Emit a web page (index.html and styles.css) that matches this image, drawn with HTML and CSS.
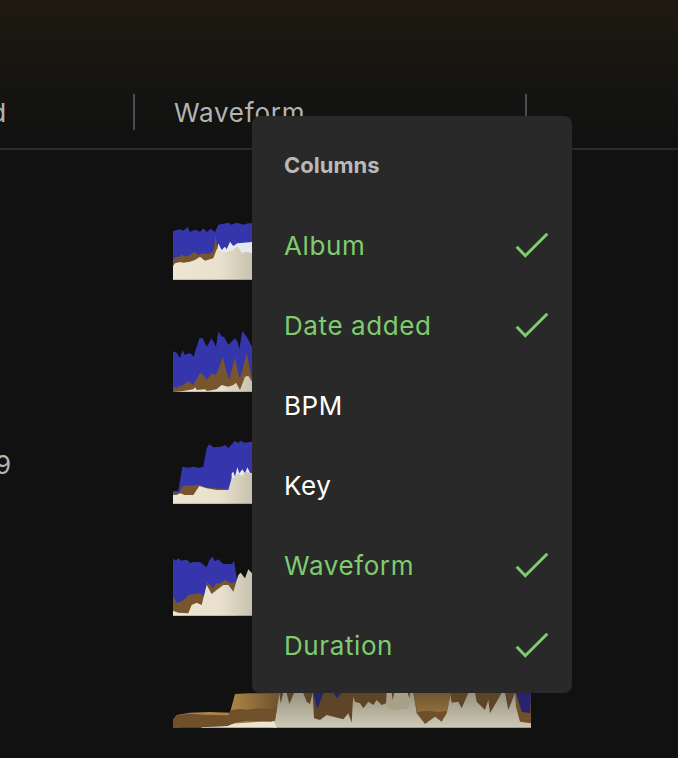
FILE: index.html
```html
<!DOCTYPE html>
<html lang="en">
<head>
<meta charset="utf-8">
<title>Columns</title>
<link rel="stylesheet" href="styles.css">
</head>
<body>
<div class="page">
  <header class="head">
    <div class="cell col-date"><span>Date added</span></div>
    <div class="cell col-wave"><span>Waveform</span></div>
    <div class="cell col-rest"></div>
  </header>
  <main class="rows">
    <div class="row">
      <div class="col-date"></div>
      <svg class="wave" viewBox="69 18 1074 192" aria-hidden="true">
        <polygon class="blue" points="69,64 80,60 90,58 100,62 106,58 112,50 120,66 130,61 140,60 150,66 160,55 170,66 182,56 195,66 205,44 220,41 235,38 245,44 260,38 280,44 295,40 306,40 1143,40 1143,209 69,209"/>
        <polygon class="brown" points="69,142 74,146 80,140 90,140 95,132 105,140 120,135 133,125 145,135 160,130 175,132 190,125 197,75 202,120 202,209 69,209"/>
        <polygon class="pale" points="200,125 205,100 215,120 225,110 230,118 240,95 250,108 262,100 280,98 306,96 1143,96 1143,140 200,140"/>
        <polygon class="cream" fill="url(#c1)" points="69,209 69,168 75,160 90,156 100,158 120,155 135,150 150,140 165,152 190,145 200,118 220,128 235,125 250,120 262,108 275,130 290,125 306,130 1143,130 1143,209"/>
        <defs><linearGradient id="c1" gradientUnits="userSpaceOnUse" x1="69" y1="0" x2="306" y2="0"><stop offset="0" stop-color="#eee6d3"/><stop offset=".6" stop-color="#e8e0cc"/><stop offset="1" stop-color="#c9c2b0"/></linearGradient></defs>
      </svg>
    </div>
    <div class="row">
      <div class="col-date"></div>
      <svg class="wave" viewBox="69 354 1074 192" aria-hidden="true">
        <polygon class="blue" points="69,424 80,428 90,445 97,420 105,435 115,430 125,432 130,442 148,385 158,385 170,410 185,385 198,410 205,364 215,380 222,380 235,404 255,385 263,395 268,418 277,363 290,380 306,410 1143,410 1143,545 69,545"/>
        <polygon class="brown" points="69,530 80,535 85,530 100,525 115,514 130,525 150,488 160,495 170,510 185,490 195,495 203,485 218,440 228,480 238,510 245,480 255,442 265,490 270,505 290,430 298,470 306,505 1143,505 1143,545 69,545"/>
        <polygon class="cream" fill="url(#c2)" points="69,545 100,543 130,538 135,532 140,540 165,538 172,543 200,538 215,525 235,530 250,525 258,518 270,540 285,500 295,497 306,515 1143,515 1143,545"/>
        <defs><linearGradient id="c2" gradientUnits="userSpaceOnUse" x1="69" y1="0" x2="306" y2="0"><stop offset="0" stop-color="#eee6d3"/><stop offset=".6" stop-color="#e8e0cc"/><stop offset="1" stop-color="#c9c2b0"/></linearGradient></defs>
      </svg>
    </div>
    <div class="row">
      <div class="col-date"><span class="date">2019</span></div>
      <svg class="wave" viewBox="69 60 1074 192" aria-hidden="true">
        <polygon class="blue" points="69,213 85,213 97,140 115,143 130,140 145,143 160,140 170,85 178,72 190,82 215,80 225,75 235,84 255,62 265,70 270,62 285,68 306,65 1143,65 1143,251 69,251"/>
        <polygon class="brown" points="69,218 88,218 98,197 150,195 170,203 235,207 250,251 69,251"/>
        <polygon class="pale" points="245,160 250,155 255,170 262,142 268,160 277,148 285,160 292,142 300,158 306,160 306,200 245,200"/>
        <polygon class="cream" fill="url(#c3)" points="69,251 69,225 80,225 90,220 105,225 130,225 148,198 170,205 200,210 235,210 245,175 255,170 265,160 275,168 290,155 306,162 1143,162 1143,251"/>
        <defs><linearGradient id="c3" gradientUnits="userSpaceOnUse" x1="69" y1="0" x2="306" y2="0"><stop offset="0" stop-color="#eee6d3"/><stop offset=".6" stop-color="#e8e0cc"/><stop offset="1" stop-color="#c9c2b0"/></linearGradient></defs>
      </svg>
    </div>
    <div class="row">
      <div class="col-date"></div>
      <svg class="wave" viewBox="69 396 1074 192" aria-hidden="true">
        <polygon class="blue" points="69,416 78,422 84,415 95,422 105,419 115,422 120,430 130,426 150,426 170,442 178,420 188,410 195,424 205,418 220,432 245,432 252,422 262,485 69,587"/>
        <polygon class="brown" points="69,530 80,548 90,545 105,538 115,525 150,520 163,530 172,485 180,495 188,505 200,490 210,490 225,480 245,490 262,483 262,587 69,587"/>
        <polygon class="cream" fill="url(#c4)" points="69,587 69,572 85,578 115,580 125,555 140,548 155,555 170,495 185,522 200,510 220,495 235,495 250,515 265,465 272,458 285,475 295,448 306,460 1143,460 1143,587"/>
        <defs><linearGradient id="c4" gradientUnits="userSpaceOnUse" x1="69" y1="0" x2="306" y2="0"><stop offset="0" stop-color="#eee6d3"/><stop offset=".6" stop-color="#e8e0cc"/><stop offset="1" stop-color="#c9c2b0"/></linearGradient></defs>
      </svg>
    </div>
    <div class="row">
      <div class="col-date"></div>
      <svg class="wave" viewBox="39 -18 1074 192" aria-hidden="true">
        <defs>
          <linearGradient id="c5" gradientUnits="userSpaceOnUse" x1="0" y1="70" x2="0" y2="173"><stop offset="0" stop-color="#98937f"/><stop offset="1" stop-color="#cfcab7"/></linearGradient>
          <linearGradient id="b5" gradientUnits="userSpaceOnUse" x1="215" y1="0" x2="355" y2="0"><stop offset="0" stop-color="#ab8547"/><stop offset="1" stop-color="#6e5230"/></linearGradient>
          <linearGradient id="d5" gradientUnits="userSpaceOnUse" x1="0" y1="69" x2="0" y2="160"><stop offset="0" stop-color="#5c4427"/><stop offset="1" stop-color="#604628"/></linearGradient>
          <linearGradient id="g5" gradientUnits="userSpaceOnUse" x1="0" y1="69" x2="0" y2="125"><stop offset="0" stop-color="#6f5530"/><stop offset="1" stop-color="#8f6e3a"/></linearGradient>
        </defs>
        <polygon fill="url(#c5)" points="352,69 1113,69 1113,173 340,173"/>
        <polygon class="glow" points="680,69 750,69 745,115 700,120 680,110"/>
        <polygon class="cream-l" points="120,173 130,170 200,168 225,158 260,152 340,150 350,173"/>
        <polygon fill="url(#b5)" points="39,173 39,150 50,135 90,128 150,126 210,128 225,72 270,70 310,70 358,69 355,90 345,152 39,173"/>
        <polygon class="mid" points="39,173 39,150 50,135 90,131 130,134 205,136 215,120 240,117 260,119 300,115 330,118 352,108 345,150 335,155 260,152 225,158 200,168 130,170 120,173"/>
        <g fill="url(#d5)">
          <polygon points="358,69 370,69 362,100"/>
          <polygon points="380,69 402,69 388,102"/>
          <polygon points="430,69 458,69 450,102 440,95"/>
          <polygon points="458,69 580,69 575,158 565,130 550,148 520,140 500,135 480,150 462,145"/>
          <polygon points="575,69 680,69 678,100 665,105 650,90 640,105 625,95 610,115 600,100 585,95"/>
          <polygon points="695,69 703,69 698,90"/>
          <polygon points="743,69 750,69 748,85"/>
          <polygon points="870,69 925,69 905,115 895,95 875,98"/>
          <polygon points="945,69 1025,69 990,130 985,90 975,120 950,95"/>
          <polygon points="1035,69 1065,69 1045,120"/>
        </g>
        <polygon class="mid" points="760,69 872,69 860,130 845,155 825,140 795,162 770,130"/>
        <polygon fill="url(#g5)" points="760,69 872,69 862,122 835,126 800,122 772,126"/>
        <polygon class="mid" points="1065,69 1113,69 1113,160 1080,155 1068,110"/>
        <polygon class="navy" points="460,69 490,69 472,118"/>
        <polygon class="navy" points="520,69 545,69 530,85"/>
        <polygon class="navy" points="1068,69 1113,69 1110,130 1085,125"/>
      </svg>
    </div>
  </main>
</div>
<section class="menu">
  <h2 class="menu-title">Columns</h2>
  <ul class="menu-list">
    <li class="item on">Album<svg class="check" viewBox="0 0 34 26"><polyline points="1.7,14.7 10.3,23.7 32.3,1.7"/></svg></li>
    <li class="item on">Date added<svg class="check" viewBox="0 0 34 26"><polyline points="1.7,14.7 10.3,23.7 32.3,1.7"/></svg></li>
    <li class="item">BPM</li>
    <li class="item">Key</li>
    <li class="item on">Waveform<svg class="check" viewBox="0 0 34 26"><polyline points="1.7,14.7 10.3,23.7 32.3,1.7"/></svg></li>
    <li class="item on">Duration<svg class="check" viewBox="0 0 34 26"><polyline points="1.7,14.7 10.3,23.7 32.3,1.7"/></svg></li>
  </ul>
</section>
</body>
</html>
```
FILE: styles.css
```css
* { box-sizing: border-box; }
html, body { margin: 0; padding: 0; height: 100%; }
body {
  background: #111111;
  font-family: "Inter", "Liberation Sans", sans-serif;
  overflow: hidden;
  position: relative;
}
.page { width: 678px; height: 758px; overflow: hidden; }
.head {
  height: 150px;
  padding-top: 94px;
  display: flex;
  align-items: flex-start;
  border-bottom: 2px solid #2a2a2a;
  background: linear-gradient(180deg, #1e1a10 0%, #1a1710 30%, #131312 70%, #111111 100%);
}
.cell {
  height: 36px;
  display: flex;
  align-items: center;
  font-size: 26px;
  letter-spacing: 0.75px;
  color: #b3b3b3;
  white-space: nowrap;
}
.col-date {
  width: 135px;
  flex: none;
  display: flex;
  justify-content: flex-end;
  overflow: hidden;
}
.head .col-date { border-right: 2px solid #4d4d4d; padding-right: 126px; }
.col-wave { width: 392px; padding-left: 39px; border-right: 2px solid #4d4d4d; }
.col-rest { flex: 1; }
.rows { display: flex; flex-direction: column; padding-top: 66px; gap: 48px; }
.row { display: flex; height: 64px; gap: 38px; align-items: flex-start; }
.row .col-date { width: 135px; height: 64px; justify-content: flex-start; }
.date {
  font-size: 26px;
  letter-spacing: 0.75px;
  color: #b3b3b3;
  margin-left: -50px;
  line-height: 32px;
  margin-top: 9px;
}
.wave { width: 358px; height: 64px; display: block; flex: none; }
.blue { fill: #3636ac; }
.brown { fill: #77552d; }
.pale { fill: #e3e9ec; }
.glow { fill: #a79f86; }
.cream-l { fill: #ece5d0; }
.mid { fill: #6f502b; }
.navy { fill: #26246e; }
.menu {
  position: absolute;
  left: 252px;
  top: 116px;
  width: 320px;
  height: 577px;
  background: #292929;
  border-radius: 8px;
  padding: 0 23px 0 32px;
}
.menu-title {
  margin: 0;
  height: 89px;
  display: flex;
  align-items: center;
  padding-top: 9px;
  font-size: 22px;
  font-weight: 700;
  color: #b9b9b9;
}
.menu-list { list-style: none; margin: 0; padding: 0; }
.item {
  height: 80px;
  display: flex;
  align-items: center;
  justify-content: space-between;
  font-size: 26px;
  letter-spacing: 0.6px;
  color: #ffffff;
}
.item.on { color: #7fcc6f; }
.check { width: 34px; height: 26px; fill: none; stroke: #7fcc6f; stroke-width: 3; }
```
